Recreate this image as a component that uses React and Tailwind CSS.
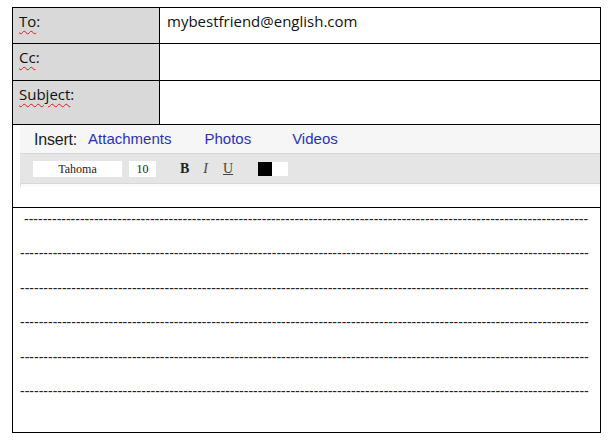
import React from 'react'

function LabelRow({ label, value, height }) {
  return (
    <div className={`flex border-b border-black ${height}`}>
      <div className="w-[147px] shrink-0 border-r border-black bg-[#d9d9d9] pl-[6px] pt-[2px]">
        <span className="underline decoration-wavy decoration-[#e01b1b] decoration-1 underline-offset-[3px]">{label}</span>
        <span>:</span>
      </div>
      <div className="flex-1 pl-[7px] pt-[2px]">{value}</div>
    </div>
  )
}

function Toolbar() {
  return (
    <div className="flex h-[83px] border-b border-black">
      <div className="ml-[7px] flex-1 flex flex-col" style={{ fontFamily: '"Liberation Sans", Arial, sans-serif' }}>
        <div className="h-[28px] bg-[#f6f6f6] flex items-center pl-[14px] pt-[1px]">
          <span className="text-[16px] text-[#222] tracking-[-0.2px]">Insert:</span>
          <span className="ml-[11px] text-[15px] text-[#2a32b4]">Attachments</span>
          <span className="ml-[33px] text-[15px] text-[#2a32b4]">Photos</span>
          <span className="ml-[41px] text-[15px] text-[#2a32b4]">Videos</span>
        </div>
        <div className="h-[31px] bg-[#e5e5e5] border-y border-[#d8d8d8] flex items-center pl-[13px]" style={{ fontFamily: '"Liberation Serif", "Times New Roman", serif' }}>
          <div className="w-[89px] h-[16px] bg-white flex items-center justify-center text-[12px] text-[#222]">Tahoma</div>
          <div className="ml-[7px] w-[27px] h-[16px] bg-white flex items-center justify-center text-[12px] text-[#222]">10</div>
          <span className="ml-[24px] text-[14px] font-bold text-[#222]">B</span>
          <span className="ml-[14px] text-[14px] italic text-[#444]">I</span>
          <span className="ml-[15px] text-[14px] underline text-[#444]">U</span>
          <div className="ml-[25px] w-[14px] h-[14px] bg-black" />
          <div className="w-[16px] h-[14px] bg-white" />
        </div>
        <div className="h-[3px] bg-[#fbfbfb] border-l border-[#e0e0e0]" />
      </div>
    </div>
  )
}

export default function App() {
  const lines = [0, 1, 2, 3, 4, 5]
  return (
    <div className="w-[613px] h-[442px] bg-white pt-[7px] pl-[12px]">
      <div
        className="w-[589px] border border-black text-[15px] text-[#111]"
        style={{ fontFamily: '"Open Sans", "Noto Sans", sans-serif' }}
      >
        <LabelRow label="To" value="mybestfriend@english.com" height="h-[36px]" />
        <LabelRow label="Cc" value="" height="h-[37px]" />
        <LabelRow label="Subject" value="" height="h-[44px]" />
        <Toolbar />
        <div className="h-[224px] pt-[1px]">
          {lines.map((i) => (
            <div
              key={i}
              className={`h-[34.4px] leading-[20px] overflow-hidden whitespace-nowrap text-[14px] text-[#222] ${i === 0 ? 'pl-[11px]' : 'pl-[7px]'}`}
              style={{ fontFamily: '"Liberation Sans", Arial, sans-serif' }}
            >
              {'-'.repeat(i === 0 ? 121 : 122)}
            </div>
          ))}
        </div>
      </div>
    </div>
  )
}
